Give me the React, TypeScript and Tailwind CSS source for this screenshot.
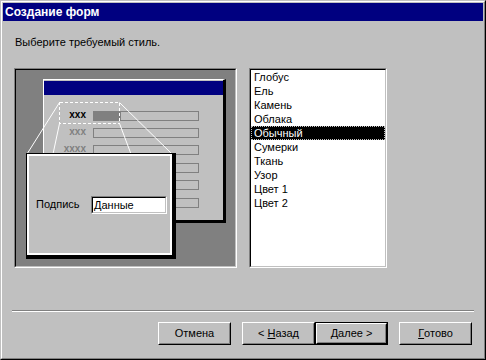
import React from "react";

const items = ["Глобус", "Ель", "Камень", "Облака", "Обычный", "Сумерки", "Ткань", "Узор", "Цвет 1", "Цвет 2"];

const rowTops = [30, 47, 64, 82, 99, 117];
const labels: { t: string; c: string }[] = [
  { t: "xxx", c: "text-black" },
  { t: "xxx", c: "text-[#808080]" },
  { t: "xxxx", c: "text-[#808080]" },
  { t: "", c: "" },
  { t: "", c: "" },
  { t: "", c: "" },
];

function Btn({ children, def = false }: { children: React.ReactNode; def?: boolean }) {
  const inner = (
    <div className="h-full w-full border border-t-white border-l-white border-r-black border-b-black">
      <div className="h-full w-full border border-t-[#c0c0c0] border-l-[#c0c0c0] border-r-[#808080] border-b-[#808080] flex items-center justify-center text-[11px] leading-none">
        {children}
      </div>
    </div>
  );
  return (
    <div className={"w-[73px] h-[23px] bg-[#c0c0c0] " + (def ? "border border-black" : "")}>{inner}</div>
  );
}

export default function App() {
  return (
    <div className="w-[486px] h-[360px] bg-[#c0c0c0] border border-t-[#c0c0c0] border-l-[#c0c0c0] border-r-black border-b-black font-['Liberation_Sans',Arial,sans-serif] text-black">
      <div className="h-full border border-t-white border-l-white border-r-[#808080] border-b-[#808080] pt-px px-px flex flex-col">
        <div className="h-[18px] bg-[#000080] text-white font-bold text-[12px] pl-[2px] flex items-center">
          Создание форм
        </div>
        <div className="mt-[14px] ml-[12px] text-[11px] leading-[14px]">Выберите требуемый стиль.</div>
        <div className="mt-[19px] ml-[11px] flex gap-[12px]">
          {/* Preview panel */}
          <div className="w-[223px] h-[200px] border border-t-[#808080] border-l-[#808080] border-r-white border-b-white">
            <div className="relative h-full border border-t-black border-l-black border-r-[#c0c0c0] border-b-[#c0c0c0] bg-[#808080] overflow-hidden">
              {/* form */}
              <div className="absolute left-[27px] top-[9px] w-[183px] h-[144px] bg-[#c0c0c0] border-t border-l border-t-white border-l-white border-r-[3px] border-b-[3px] border-black">
                <div className="relative h-full">
                  <div className="mt-px h-[14px] bg-[#000080]" />
                  {rowTops.map((t, i) => (
                    <React.Fragment key={i}>
                      {labels[i].t && (
                        <div
                          className={"absolute left-0 w-[42px] text-right font-bold text-[10px] leading-[10px] " + labels[i].c}
                          style={{ top: t - 1 }}
                        >
                          {labels[i].t}
                        </div>
                      )}
                      <div
                        className="absolute left-[49px] w-[106px] h-[10px] border border-[#808080] flex"
                        style={{ top: t }}
                      >
                        {i === 0 && <div className="w-[27px] h-full bg-[#808080]" />}
                      </div>
                    </React.Fragment>
                  ))}
                </div>
              </div>
              {/* zoom lines */}
              <svg className="absolute left-0 top-0" width="219" height="196" viewBox="0 0 219 196">
                <g stroke="#ffffff" strokeWidth="1" fill="none" shapeRendering="crispEdges">
                  <rect x="43.5" y="32.5" width="60" height="21" strokeDasharray="3 2" />
                </g>
                <g stroke="#ffffff" strokeWidth="1" fill="none">
                  <line x1="43.5" y1="32.5" x2="11" y2="84" />
                  <line x1="43.5" y1="53.5" x2="37" y2="84" />
                  <line x1="103.5" y1="32.5" x2="156" y2="84" />
                  <line x1="103.5" y1="53.5" x2="115" y2="84" />
                </g>
              </svg>
              {/* popup */}
              <div className="absolute left-[10px] top-[83px] w-[150px] h-[106px] border-t border-l border-black border-r-[4px] border-b-[4px]">
                <div className="relative h-full border-2 border-white bg-[#c0c0c0]">
                  <div className="absolute left-[7px] top-[41px] text-[11px] leading-[14px]">Подпись</div>
                  <div className="absolute left-[62px] top-[40px] w-[76px] h-[18px] border border-t-[#808080] border-l-[#808080] border-r-white border-b-white">
                    <div className="h-full border border-t-black border-l-black border-r-[#c0c0c0] border-b-[#c0c0c0] bg-white text-[11px] leading-[14px] pl-[1px]">
                      Данные
                    </div>
                  </div>
                </div>
              </div>
            </div>
          </div>
          {/* List */}
          <div className="w-[138px] h-[200px] border border-t-[#808080] border-l-[#808080] border-r-white border-b-white">
            <div className="h-full border border-t-black border-l-black border-r-[#c0c0c0] border-b-[#c0c0c0] bg-white">
              {items.map((it) => (
                <div
                  key={it}
                  className={
                    "h-[14px] leading-[14px] text-[11px] pl-[3px] " +
                    (it === "Обычный" ? "bg-black text-white outline-1 outline-dotted outline-[#c0c0c0] outline-offset-[-1px]" : "")
                  }
                >
                  {it}
                </div>
              ))}
            </div>
          </div>
        </div>
        <div className="mt-[42px] ml-[9px] w-[462px] h-[2px] border-t border-t-[#808080] border-b border-b-white" />
        <div className="mt-[10px] flex justify-end mr-[11px]">
          <Btn>Отмена</Btn>
          <div className="ml-[11px]">
            <Btn>
              &lt; <span className="underline ml-[3px]">Н</span>азад
            </Btn>
          </div>
          <Btn def>
            <span className="underline">Д</span>алее &gt;
          </Btn>
          <div className="ml-[11px]">
            <Btn>
              <span className="underline">Г</span>отово
            </Btn>
          </div>
        </div>
      </div>
    </div>
  );
}
